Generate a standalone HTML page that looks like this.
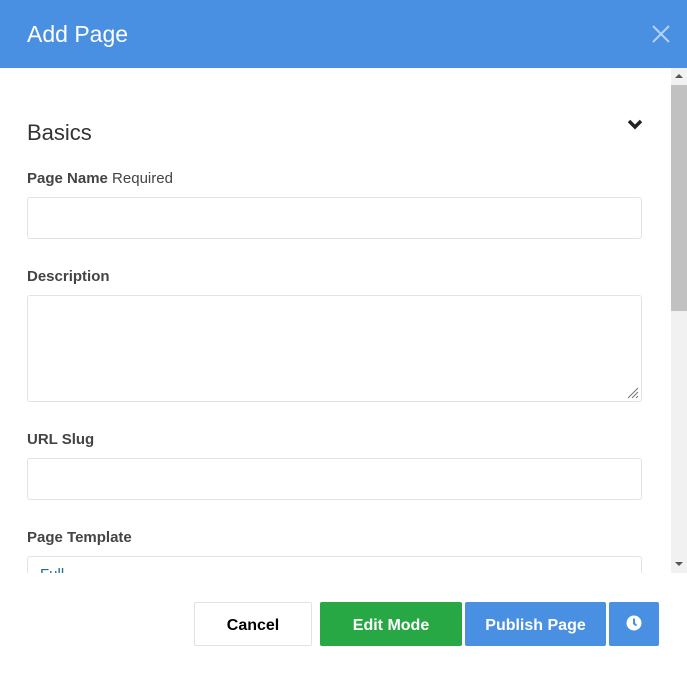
<!DOCTYPE html>
<html><head><style>
*{box-sizing:border-box;margin:0;padding:0}
body{width:687px;height:675px;background:#fff;font-family:"Liberation Sans",sans-serif;position:relative;overflow:hidden;color:#333}
.hd{position:absolute;left:0;top:0;width:687px;height:68px;background:#4a90e2}
.hd h1{position:absolute;left:27px;top:21px;font-size:23px;font-weight:normal;color:#fff}
.sb{position:absolute;left:671px;top:68px;width:16px;height:505px;background:#f1f1f1}
.th{position:absolute;left:671px;top:85px;width:16px;height:226px;background:#c1c1c1}
.lbl{position:absolute;left:27px;font-size:15px;font-weight:bold;color:#444}
.lbl span{font-weight:normal}
.in{position:absolute;left:27px;width:615px;border:1px solid #e3e3e3;border-radius:3px}
.btn{position:absolute;top:602px;height:44px;line-height:44px;font-size:16px;font-weight:bold;color:#fff;text-align:center;border-radius:2px;padding-top:2px}
</style></head><body>
<div class="hd"><h1>Add Page</h1>
<svg style="position:absolute;left:652px;top:25px" width="18" height="18"><path d="M1 1L17 17M17 1L1 17" stroke="#b5d1f3" stroke-width="2"/></svg></div>
<div style="position:absolute;left:27px;top:120px;font-size:22px;color:#333">Basics</div>
<svg style="position:absolute;left:627px;top:119px" width="16" height="12"><path d="M2 2L8 8L14 2" stroke="#222" stroke-width="3.5" fill="none"/></svg>
<div class="lbl" style="top:170px">Page Name <span>Required</span></div>
<div class="in" style="top:197px;height:42px"></div>
<div class="lbl" style="top:268px">Description</div>
<div class="in" style="top:295px;height:107px"></div>
<svg style="position:absolute;left:627px;top:387px" width="12" height="12"><path d="M11 1L1 11M11 5L5 11M11 9L9 11" stroke="#777" stroke-width="1"/></svg>
<div class="lbl" style="top:431px">URL Slug</div>
<div class="in" style="top:458px;height:42px"></div>
<div class="lbl" style="top:529px">Page Template</div>
<div style="position:absolute;left:0;top:556px;width:671px;height:17px;overflow:hidden">
<div class="in" style="top:0;height:42px"></div>
<div style="position:absolute;left:40px;top:10px;color:#1a6f8a;font-size:15px">Full</div></div>
<div class="sb"></div><div class="th"></div>
<svg style="position:absolute;left:674px;top:72px" width="10" height="8"><path d="M1 6L5 2L9 6Z" fill="#555"/></svg>
<svg style="position:absolute;left:674px;top:560px" width="10" height="8"><path d="M1 2L5 6L9 2Z" fill="#555"/></svg>
<div class="btn" style="left:194px;width:118px;background:#fff;border:1px solid #e3e3e3;color:#000;line-height:42px">Cancel</div>
<div class="btn" style="left:320px;width:142px;background:#28a745">Edit Mode</div>
<div class="btn" style="left:465px;width:141px;background:#4a90e2">Publish Page</div>
<div class="btn" style="left:609px;width:50px;background:#4a90e2;padding-top:0"><svg style="margin-top:13px" width="16" height="16"><circle cx="8" cy="8" r="7.5" fill="#fff"/><path d="M8 3.5V8.5L10.5 10.5" stroke="#4a90e2" stroke-width="2" fill="none"/></svg></div>
</body></html>
